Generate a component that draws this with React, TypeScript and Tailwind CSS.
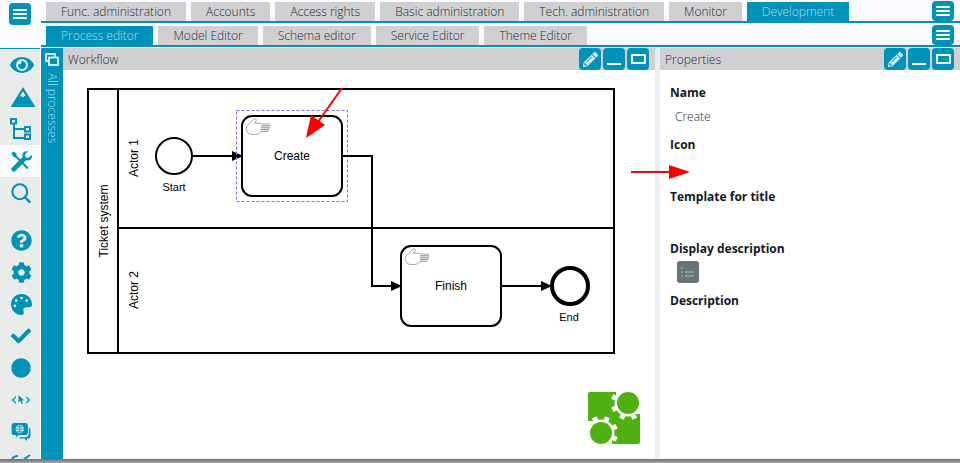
import React from "react";
import { FaEye, FaQuestionCircle, FaCog, FaPalette, FaCheck, FaCircle, FaPencilAlt } from "react-icons/fa";

const BLUE = "#0092b9";

function MenuBtn({ className = "h-[22px]" }: { className?: string }) {
  return (
    <div className={"w-[22px] rounded-[4px] bg-[#0092b9] flex flex-col items-center justify-center gap-[2px] " + className}>
      <div className="w-[14px] h-[2px] bg-white rounded-[1px]" />
      <div className="w-[14px] h-[2px] bg-white rounded-[1px]" />
      <div className="w-[14px] h-[2px] bg-white rounded-[1px]" />
    </div>
  );
}

function PanelButtons() {
  return (
    <div className="flex gap-[2px] ml-auto">
      <div className="w-[22px] h-[22px] rounded-[4px] bg-[#0092b9] flex items-center justify-center text-[#d8eef5]">
        <FaPencilAlt size={15} />
      </div>
      <div className="w-[22px] h-[22px] rounded-[4px] bg-[#0092b9] flex items-end justify-center pb-[5px]">
        <div className="w-[14px] h-[2px] bg-white" />
      </div>
      <div className="w-[22px] h-[22px] rounded-[4px] bg-[#0092b9] flex items-center justify-center">
        <div className="w-[15px] h-[10px] border-2 border-white rounded-[1px]" />
      </div>
    </div>
  );
}

function Tab({ label, active = false }: { label: string; active?: boolean }) {
  return (
    <div className={"h-[19px] px-[15px] flex items-center leading-none whitespace-nowrap text-[12px] font-light " + (active ? "bg-[#0092b9] text-[#a8deec]" : "bg-[#d0d0d2] text-[#2a2a36]")}>
      {label}
    </div>
  );
}

function TreeIcon() {
  return (
    <svg width="22" height="22" viewBox="0 0 22 22" fill="none" stroke={BLUE} strokeWidth="2">
      <rect x="1" y="1" width="5" height="4.5" />
      <rect x="15" y="9" width="5" height="4.5" />
      <rect x="15" y="16.5" width="5" height="4.5" />
      <path d="M4 6v14h11M4 11h11" />
    </svg>
  );
}

function WrenchIcon() {
  return (
    <svg width="23" height="23" viewBox="0 0 24 24" fill={BLUE} stroke="none">
      <path d="M1.5 3.5 3.5 1.5 6.5 3.5 7 6l12.5 12.5-1.5 1.5L5.5 7.5 3.5 7z" />
      <path d="M22.5 5.2 19.3 8.4 16.3 7.6 15.6 4.7 18.8 1.5C16.3.7 13.6 2 13 4.6c-.2 1-.1 2 .2 2.8L2 18.6c-1.2 1.2-.5 3 .4 3.6.9.6 2.2.6 3.2-.4L16.7 10.6c2.8 1 5.7-.4 6.2-3.1.1-.8 0-1.6-.4-2.3z" />
    </svg>
  );
}

function SearchIcon() {
  return (
    <svg width="21" height="21" viewBox="0 0 24 24" fill="none" stroke={BLUE}>
      <circle cx="10" cy="10" r="8.5" strokeWidth="2.4" />
      <path d="M15.8 16 22 22.5" strokeWidth="2.8" />
    </svg>
  );
}

function MountainIcon() {
  return (
    <svg width="26" height="20" viewBox="0 0 26 21" fill={BLUE} className="ml-[4px]">
      <path fillRule="evenodd" d="M13 0 26 21H0zM13 4.5 9.6 10l1.6-.6 1.8 1.6 1.6-1.8 1.6.8z" />
    </svg>
  );
}

function CodeCursorIcon() {
  return (
    <svg width="20" height="10" viewBox="0 0 20 10" fill={BLUE}>
      <path d="M5 1 0.5 5 5 9V7.4L2.6 5 5 2.6zM15 1l4.5 4L15 9V7.4L17.4 5 15 2.6z" />
      <path d="M7.5 0 13 5.2l-2.2.2 1.2 3-1.3.6-1.2-3L7.5 7.5z" />
    </svg>
  );
}

function ChatGlobeIcon() {
  return (
    <svg width="20" height="18" viewBox="0 0 22 21" fill={BLUE}>
      <path d="M3 0h13a3 3 0 0 1 3 3v8a3 3 0 0 1-3 3H8l-3 3v-3H3a3 3 0 0 1-3-3V3a3 3 0 0 1 3-3z" />
      <path d="M20 5.5a2.5 2.5 0 0 1 2 2.5v7a3 3 0 0 1-3 3h-1v3l-3-3H9l1.5-1.5H16a4 4 0 0 0 4-4z" />
      <circle cx="9.5" cy="7" r="5" fill="#b9dfe9" />
      <path d="M4.5 7h10M9.5 2v10M6 3.8h7M6 10.2h7" stroke={BLUE} strokeWidth="0.8" fill="none" />
    </svg>
  );
}

function PartialIcon() {
  return (
    <svg width="20" height="32" viewBox="0 0 20 32" fill="none" stroke={BLUE} strokeWidth="2">
      <path d="M1 11c1-2 3-3 6-3M13 11l2-1 4-3" />
    </svg>
  );
}

function HandIcon({ x, y }: { x: number; y: number }) {
  return (
    <g transform={`translate(${x} ${y})`} fill="#fff" stroke="#9a9a9a" strokeWidth="0.9">
      <path d="M1 9C1.5 7.5 7 2.5 8.5 1.2 10 0 11.5 1.5 10.6 3L9 5.2H15C16 5.2 16.3 6 17 6H23.5C24.6 6 24.6 7.6 23.6 7.8 24.4 8.4 24.2 9.6 23.3 9.8 24 10.5 23.6 11.6 22.7 11.7 23.2 12.5 22.6 13.5 21.6 13.5H15.5C14 15 12.5 16.5 10 16.5H6C2.5 16.5.2 12.5 1 9z" />
      <path d="M15.5 7.8H23.5M15.5 9.8H23.3M15.5 11.7H22.7" stroke="#777" />
    </g>
  );
}

function RailItem({ children, active = false }: { children: React.ReactNode; active?: boolean }) {
  return (
    <div className={"h-[32px] w-full pl-[2px] flex items-center justify-center shrink-0 " + (active ? "bg-[#fbfcff]" : "")}>
      {children}
    </div>
  );
}

function Field({ label, children }: { label: string; children?: React.ReactNode }) {
  return (
    <div className="h-[52px] pl-[10px]">
      <div className="h-[24px] flex items-center text-[12px] font-bold text-[#111827] leading-none">{label}</div>
      {children}
    </div>
  );
}

function Diagram() {
  const font = "'Liberation Sans', Arial, sans-serif";
  return (
    <svg width="592" height="389" viewBox="63 70 592 389" className="block" fontFamily={font} fontSize="11" fill="#000">
      <rect x="88" y="89" width="526" height="264" fill="#fff" stroke="#000" strokeWidth="2" />
      <path d="M118 89V353M118 228H614" stroke="#000" strokeWidth="2" fill="none" />
      <text transform="translate(108 221) rotate(-90)" textAnchor="middle" fontSize="12">Ticket system</text>
      <text transform="translate(138 158) rotate(-90)" textAnchor="middle" fontSize="12">Actor 1</text>
      <text transform="translate(138 290) rotate(-90)" textAnchor="middle" fontSize="12">Actor 2</text>

      <circle cx="174" cy="156" r="18" fill="#fff" stroke="#000" strokeWidth="2" />
      <text x="174" y="191" textAnchor="middle">Start</text>
      <path d="M192 156H232" stroke="#000" strokeWidth="2" fill="none" />
      <path d="M232 151 243 156 232 161z" />

      <rect x="236.5" y="110.5" width="111" height="91" fill="none" stroke="#7070ff" strokeWidth="1" strokeDasharray="3 2" />
      <rect x="242" y="116" width="100" height="80" rx="10" fill="#fff" stroke="#000" strokeWidth="2" />
      <HandIcon x={245.5} y={118} />
      <text x="292" y="160" textAnchor="middle" fontSize="12">Create</text>

      <path d="M342 156H372V286H392" stroke="#000" strokeWidth="2" fill="none" />
      <path d="M391 281 402 286 391 291z" />

      <rect x="401" y="246" width="100" height="80" rx="10" fill="#fff" stroke="#000" strokeWidth="2" />
      <HandIcon x={404.5} y={248} />
      <text x="451" y="290" textAnchor="middle" fontSize="12">Finish</text>

      <path d="M501 286H541" stroke="#000" strokeWidth="2" fill="none" />
      <path d="M541 281 552 286 541 291z" />
      <circle cx="570" cy="286" r="18" fill="#fff" stroke="#000" strokeWidth="4" />
      <text x="569" y="321" textAnchor="middle">End</text>
    </svg>
  );
}

function Gear({ cx, cy }: { cx: number; cy: number }) {
  const teeth = [0, 45, 90, 135, 180, 225, 270, 315];
  return (
    <g fill="#fff">
      <circle cx={cx} cy={cy} r="13.5" />
      {teeth.map((a) => (
        <rect key={a} x={cx - 2.5} y={cy - 17} width="5" height="5" transform={`rotate(${a + 22} ${cx} ${cy})`} />
      ))}
      <circle cx={cx} cy={cy} r="11" fill="#4fb012" />
    </g>
  );
}

function Logo() {
  return (
    <svg width="52" height="52" viewBox="588 392 52 52" className="absolute right-[15px] bottom-[15px]">
      <rect x="588" y="392" width="52" height="52" rx="2" fill="#4fb012" />
      <rect x="616" y="392" width="24" height="11" fill="#fff" />
      <rect x="628" y="392" width="12" height="22" fill="#fff" />
      <rect x="588" y="433" width="24" height="11" fill="#fff" />
      <rect x="588" y="421" width="13" height="23" fill="#fff" />
      <Gear cx={628} cy={403} />
      <Gear cx={601} cy={433} />
    </svg>
  );
}

export default function App() {
  return (
    <div className="relative w-[960px] h-[463px] overflow-hidden bg-white font-['Open_Sans',sans-serif]">
      <div className="flex flex-col h-[459px] overflow-hidden">
        <div className="flex flex-1 min-h-0">
          {/* left rail */}
          <div className="w-[40px] shrink-0 flex flex-col bg-[#e9ebeb] overflow-hidden mr-[1px]">
            <div className="h-[49px] shrink-0 bg-[#fbfcff] border-b border-[#0092b9] pt-[3px] pl-[9px]">
              <MenuBtn />
            </div>
            <div className="flex flex-col">
              <RailItem><FaEye size={24} color={BLUE} className="ml-[2px]" /></RailItem>
              <RailItem><MountainIcon /></RailItem>
              <RailItem><TreeIcon /></RailItem>
              <RailItem active><WrenchIcon /></RailItem>
              <RailItem><SearchIcon /></RailItem>
              <div className="h-[15px] shrink-0" />
              <RailItem><FaQuestionCircle size={21} color={BLUE} /></RailItem>
              <RailItem><FaCog size={21} color={BLUE} /></RailItem>
              <RailItem><FaPalette size={21} color={BLUE} /></RailItem>
              <RailItem><FaCheck size={20} color={BLUE} /></RailItem>
              <RailItem><FaCircle size={20} color={BLUE} /></RailItem>
              <RailItem><CodeCursorIcon /></RailItem>
              <RailItem><ChatGlobeIcon /></RailItem>
              <RailItem><PartialIcon /></RailItem>
            </div>
          </div>

          {/* main */}
          <div className="flex-1 min-w-0 flex flex-col">
            <div className="h-[23px] shrink-0 bg-[#fbfcff] border-b-2 border-[#0092b9] flex pl-[5px] pt-[2px] gap-[5px] relative">
              <Tab label="Func. administration" />
              <Tab label="Accounts" />
              <Tab label="Access rights" />
              <Tab label="Basic administration" />
              <Tab label="Tech. administration" />
              <Tab label="Monitor" />
              <Tab label="Development" active />
              <div className="absolute right-[6px] top-[1px]"><MenuBtn className="h-[20px]" /></div>
            </div>
            <div className="h-[24px] shrink-0 bg-[#fbfcff] border-b-2 border-[#0092b9] flex pl-[5px] pt-[3px] gap-[5px] relative">
              <Tab label="Process editor" active />
              <Tab label="Model Editor" />
              <Tab label="Schema editor" />
              <Tab label="Service Editor" />
              <Tab label="Theme Editor" />
              <div className="absolute right-[6px] top-[2px]"><MenuBtn className="h-[20px]" /></div>
            </div>
            <div className="h-[1px] shrink-0" />
            <div className="flex-1 min-h-0 flex">
              {/* all processes */}
              <div className="w-[22px] shrink-0 bg-[#0092b9] flex flex-col items-center pt-[5px] text-[#a8deec]">
                <svg width="14" height="13" viewBox="0 0 14 13" fill="none" stroke="#fff" strokeWidth="1.6">
                  <rect x="1" y="1" width="9" height="7" />
                  <rect x="4" y="4.5" width="9" height="7.5" fill="#0092b9" />
                </svg>
                <div className="[writing-mode:vertical-rl] text-[12px] font-light leading-none mt-[7px]">All processes</div>
              </div>
              {/* workflow */}
              <div className="w-[592px] shrink-0 flex flex-col relative">
                <div className="h-[22px] shrink-0 bg-[#d0d0d2] flex items-center pl-[5px] text-[12px] font-light text-[#2a2a36] pr-[6px]">
                  <span className="pt-[1px]">Workflow</span>
                  <PanelButtons />
                </div>
                <Diagram />
                <Logo />
              </div>
              <div className="w-[5px] shrink-0 bg-[#e9edf0]" />
              {/* properties */}
              <div className="flex-1 min-w-0 flex flex-col">
                <div className="h-[22px] shrink-0 bg-[#d0d0d2] flex items-center pl-[5px] text-[12px] font-light text-[#2a2a36] pr-[6px]">
                  <span className="pt-[1px]">Properties</span>
                  <PanelButtons />
                </div>
                <div className="pt-[11px]">
                  <Field label="Name">
                    <div className="pl-[5px] text-[12px] font-light text-[#2a2a36] h-[24px] flex items-center">Create</div>
                  </Field>
                  <Field label="Icon" />
                  <Field label="Template for title" />
                  <Field label="Display description">
                    <div className="w-[22px] h-[22px] ml-[7px] rounded-[3px] bg-[#66757a] flex flex-col justify-center gap-[2px] px-[4px]">
                      <div className="flex items-center gap-[2px]"><div className="w-[2px] h-[2px] bg-[#8d9a9e]" /></div>
                      <div className="flex items-center gap-[2px]"><div className="w-[2px] h-[2px] bg-[#8d9a9e]" /><div className="w-[9px] h-[1.5px] bg-[#8d9a9e]" /></div>
                      <div className="flex items-center gap-[2px]"><div className="w-[2px] h-[2px] bg-[#8d9a9e]" /><div className="w-[9px] h-[1.5px] bg-[#8d9a9e]" /></div>
                    </div>
                  </Field>
                  <Field label="Description" />
                </div>
              </div>
            </div>
          </div>
        </div>
      </div>
      <div className="h-[4px] bg-gradient-to-b from-[#6e6e6e] to-[#a8a8a8]" />

      {/* annotation arrows */}
      <svg className="absolute left-0 top-0 pointer-events-none" width="960" height="463">
        <path d="M342 88 318 122" stroke="#ff0000" strokeWidth="2" fill="none" />
        <path d="M306 138 311 115 325 125z" fill="#ff0000" />
        <path d="M631 172H670" stroke="#ff0000" strokeWidth="2" fill="none" />
        <path d="M669 165 690 172 669 179z" fill="#ff0000" />
      </svg>
    </div>
  );
}
